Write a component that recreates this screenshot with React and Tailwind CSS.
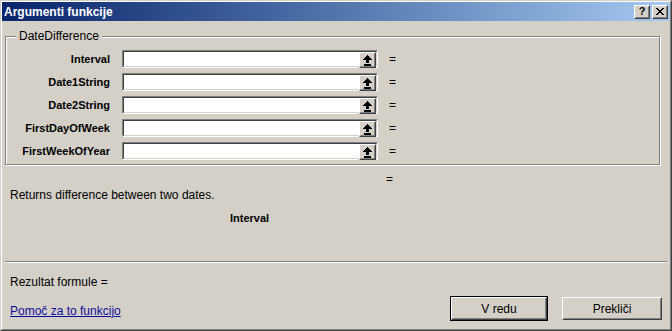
import React from "react";

const font = { fontFamily: '"Liberation Sans", Arial, sans-serif' };

function Raised({ className = "", children }) {
  return (
    <div className={"border border-t-white border-l-white border-r-[#404040] border-b-[#404040] " + className}>
      <div className="w-full h-full border border-t-[#d4d0c8] border-l-[#d4d0c8] border-r-[#808080] border-b-[#808080] bg-[#d4d0c8] flex items-center justify-center">
        {children}
      </div>
    </div>
  );
}

function UpIcon() {
  return (
    <svg width="9" height="11" viewBox="0 0 9 11" shapeRendering="crispEdges">
      <path d="M4 0h1v1h1v1h1v1h1v1h1v1H6v3H3V5H0V4h1V3h1V2h1V1h1z" fill="#000" />
      <rect x="1" y="9" width="7" height="2" fill="#000" />
    </svg>
  );
}

function Field({ label }) {
  return (
    <div className="flex items-center h-[18px]">
      <div className="w-[104px] text-right font-bold text-[11px] text-black">{label}</div>
      <div className="ml-[12px] w-[256px] h-[18px] border border-t-[#808080] border-l-[#808080] border-r-white border-b-white">
        <div className="w-full h-full border border-t-[#404040] border-l-[#404040] border-r-[#d4d0c8] border-b-[#d4d0c8] bg-white flex justify-end">
          <Raised className="w-[17px] h-[16px]">
            <UpIcon />
          </Raised>
        </div>
      </div>
      <div className="ml-[11px] text-[12px] text-black">=</div>
    </div>
  );
}

export default function App() {
  return (
    <div style={font} className="w-[672px] h-[331px] border border-t-[#d4d0c8] border-l-[#d4d0c8] border-r-[#404040] border-b-[#404040] bg-[#d4d0c8]">
      <div className="w-full h-full border border-t-white border-l-white border-r-[#808080] border-b-[#808080] flex flex-col">
        {/* title bar */}
        <div className="h-[19px] flex items-center bg-gradient-to-r from-[#0a246a] to-[#a6caf0] pl-[2px] pr-[2px]">
          <div className="text-white font-bold text-[12px] flex-1">Argumenti funkcije</div>
          <Raised className="w-[16px] h-[14px]">
            <span className="font-bold text-[11px] leading-none text-black">?</span>
          </Raised>
          <Raised className="ml-[2px] w-[16px] h-[14px]">
            <svg width="8" height="7" viewBox="0 0 8 7" shapeRendering="crispEdges">
              <path d="M0 0h2v1h1v1h2V1h1V0h2v1H7v1H6v1H5v1h1v1h1v1h1v1H6V6H5V5H3v1H2v1H0V6h1V5h1V4h1V3H2V2H1V1H0z" fill="#000" />
            </svg>
          </Raised>
        </div>

        {/* fieldset */}
        <div className="relative mt-[15px] ml-[3px] mr-[10px] h-[129px] border border-[#808080] shadow-[1px_1px_0_#fff,inset_1px_1px_0_#fff]">
          <div className="absolute -top-[8px] left-[10px] px-[3px] bg-[#d4d0c8] text-[12px] text-black leading-[14px]">DateDifference</div>
          <div className="mt-[13px] flex flex-col gap-[5px]">
            <Field label="Interval" />
            <Field label="Date1String" />
            <Field label="Date2String" />
            <Field label="FirstDayOfWeek" />
            <Field label="FirstWeekOfYear" />
          </div>
        </div>

        <div className="mt-[7px] ml-[384px] text-[12px] text-black leading-[14px]">=</div>
        <div className="mt-[2px] ml-[8px] text-[12px] text-black leading-[14px]">Returns difference between two dates.</div>
        <div className="mt-[9px] ml-[228px] text-[11px] font-bold text-black leading-[14px]">Interval</div>

        <div className="mt-[36px] ml-[3px] mr-[3px] h-[2px] border-t border-t-[#808080] border-b border-b-white"></div>

        <div className="mt-[12px] ml-[8px] text-[12px] text-black leading-[14px]">Rezultat formule =</div>

        <div className="mt-[7px] flex items-center">
          <a className="ml-[8px] mt-[4px] text-[12px] text-[#0c0c9c] underline leading-[14px] flex-1">Pomoč za to funkcijo</a>
          <div className="w-[98px] h-[25px] border border-black">
            <Raised className="w-full h-full">
              <span className="text-[12px] text-black">V redu</span>
            </Raised>
          </div>
          <Raised className="ml-[14px] mr-[8px] w-[100px] h-[23px]">
            <span className="text-[12px] text-black">Prekliči</span>
          </Raised>
        </div>
      </div>
    </div>
  );
}
